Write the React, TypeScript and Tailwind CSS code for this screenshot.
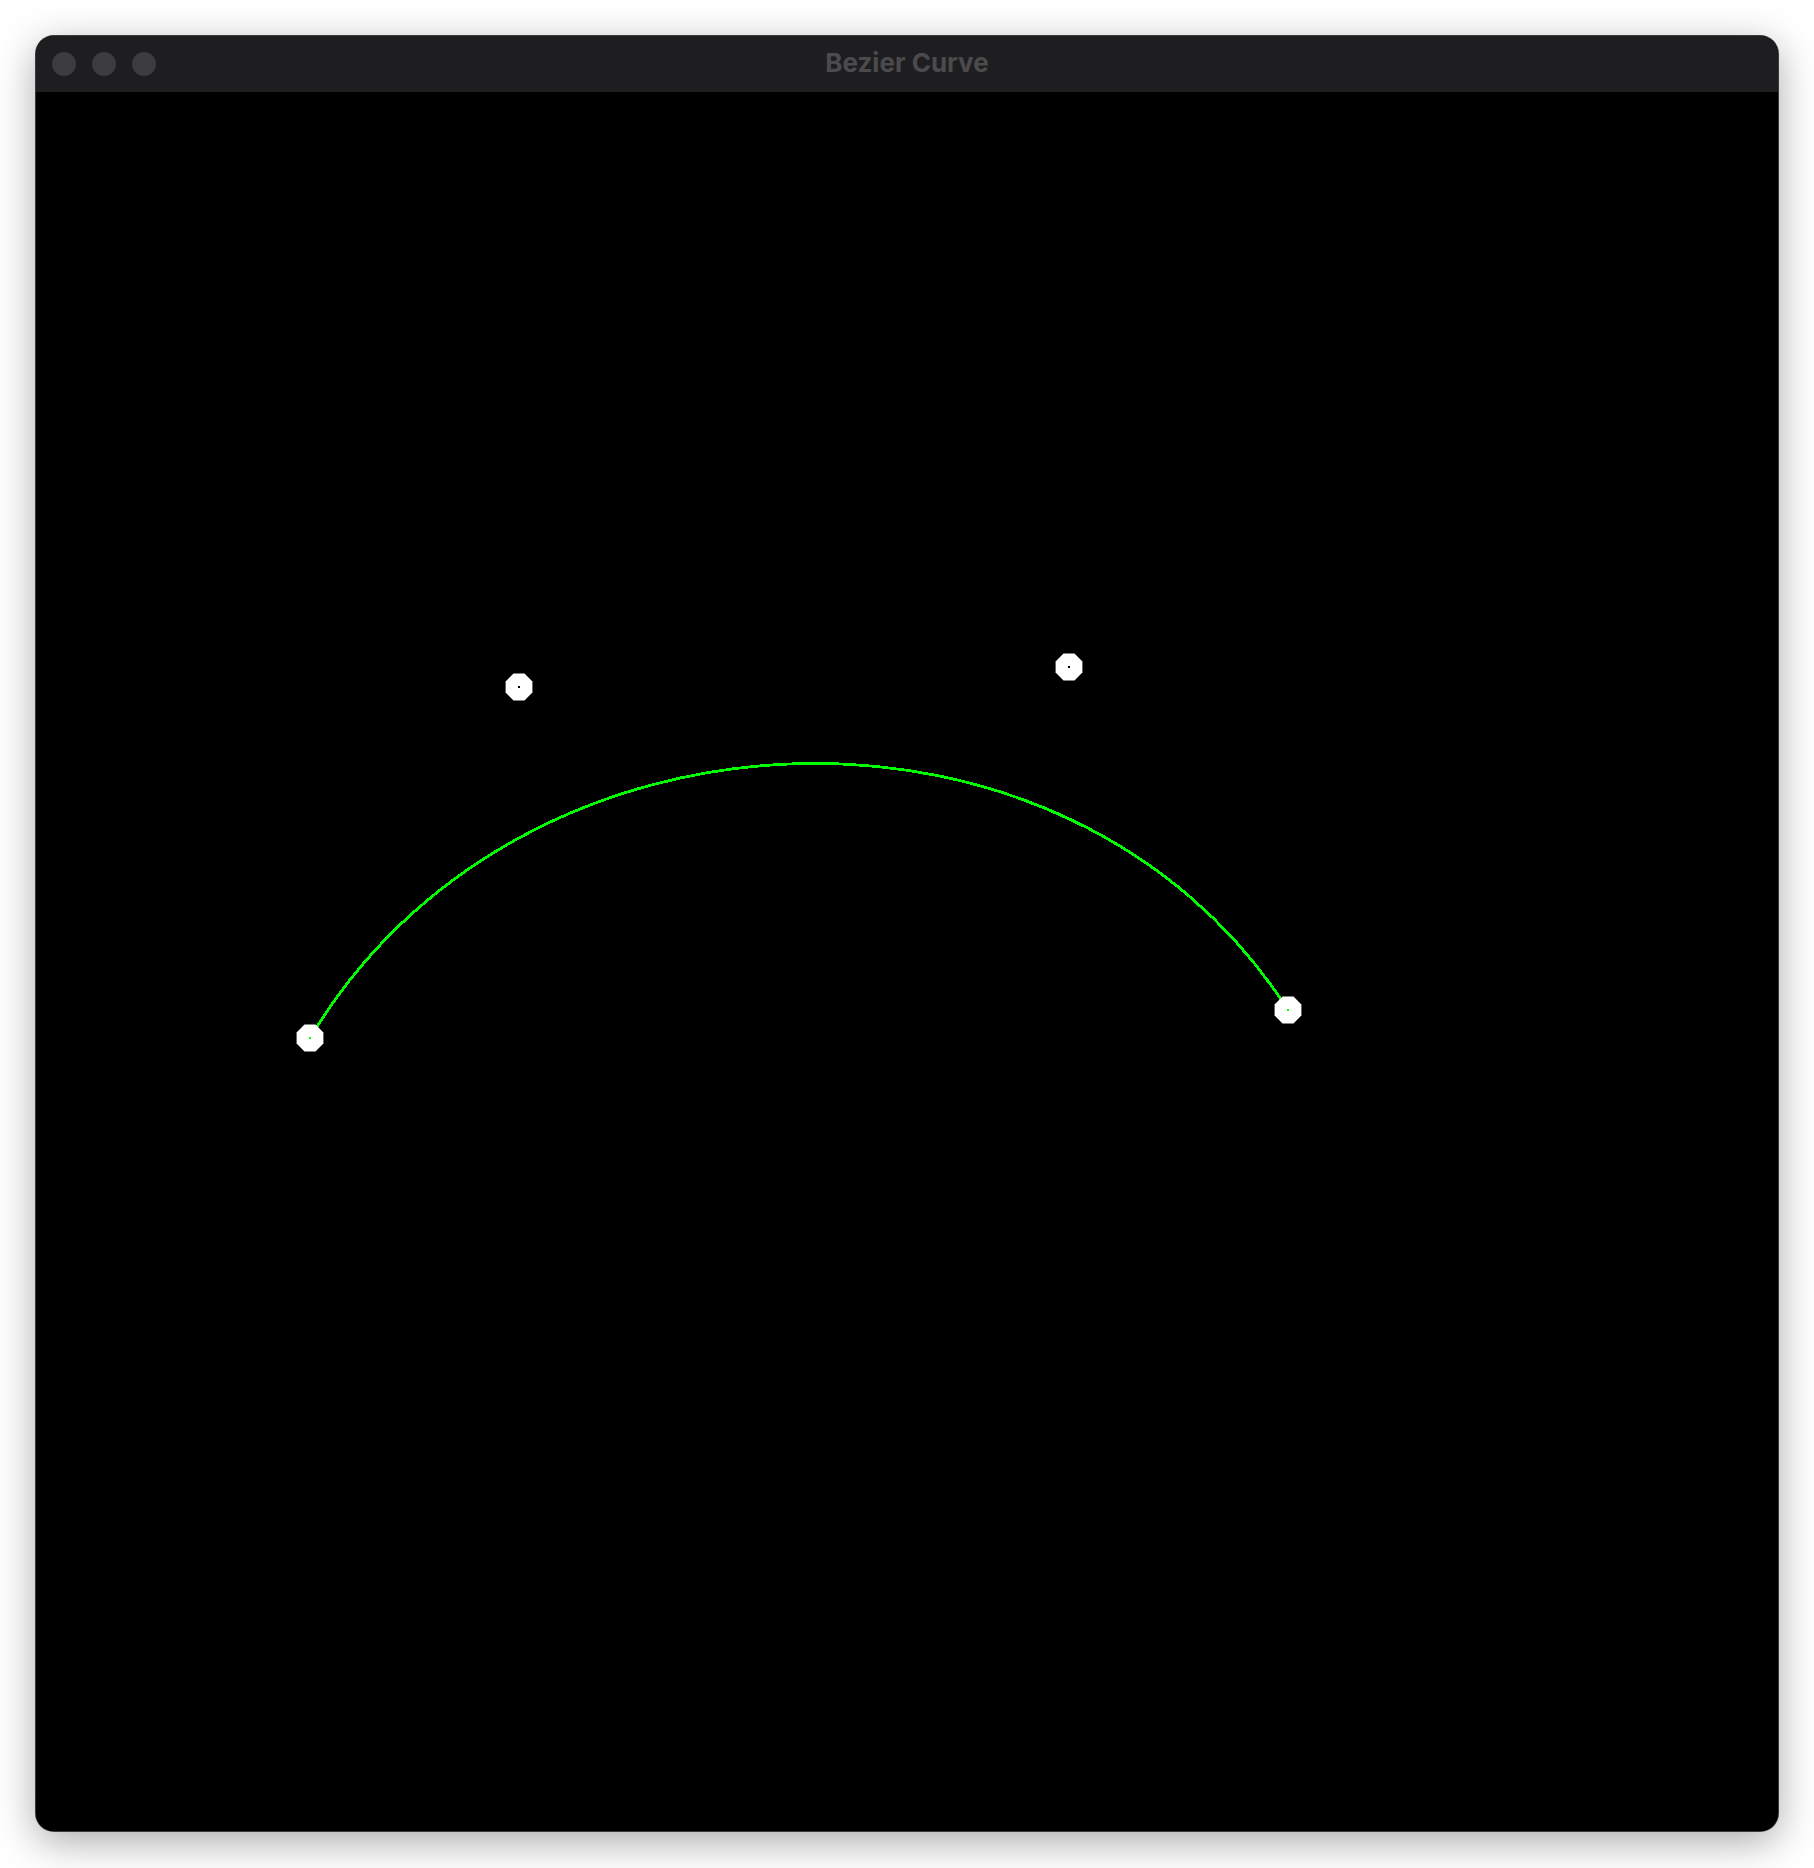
const P = [
  { x: 310, y: 1038 },
  { x: 519, y: 687 },
  { x: 1069, y: 667 },
  { x: 1288, y: 1010 },
];

const TOP = 92;
const LEFT = 36;

function octagon(cx: number, cy: number, r: number) {
  const pts: string[] = [];
  for (let i = 0; i < 8; i++) {
    const a = ((22.5 + i * 45) * Math.PI) / 180;
    pts.push(`${(cx + r * Math.cos(a)).toFixed(1)},${(cy + r * Math.sin(a)).toFixed(1)}`);
  }
  return pts.join(" ");
}

function BezierCanvas() {
  const p = P.map((q) => ({ x: q.x - LEFT, y: q.y - TOP }));
  const d = `M${p[0].x},${p[0].y} C${p[1].x},${p[1].y} ${p[2].x},${p[2].y} ${p[3].x},${p[3].y}`;
  return (
    <svg width="1742" height="1739" className="block">
      <path d={d} fill="none" stroke="#00ff00" strokeWidth={2.8} shapeRendering="crispEdges" />
      {p.map((q, i) => (
        <g key={i}>
          <polygon points={octagon(q.x, q.y, 14.5)} fill="#ffffff" />
          <rect
            x={q.x - 1}
            y={q.y - 1}
            width={2}
            height={2}
            fill={i === 0 || i === 3 ? "#00ff00" : "#000000"}
          />
        </g>
      ))}
    </svg>
  );
}

export default function App() {
  return (
    <div className="w-[1814px] h-[1868px] bg-white p-[36px]">
      <div className="w-[1742px] h-[1795px] rounded-[18px] overflow-hidden bg-black flex flex-col shadow-[0_10px_40px_rgba(0,0,0,0.35)] ring-1 ring-[#3a3a3c]">
        <div className="h-[56px] bg-[#1e1e20] relative flex items-center justify-center shrink-0">
          <div className="absolute left-[16px] top-[16px] flex gap-[16px]">
            <div className="w-[24px] h-[24px] rounded-full bg-[#3c3c3e]" />
            <div className="w-[24px] h-[24px] rounded-full bg-[#3c3c3e]" />
            <div className="w-[24px] h-[24px] rounded-full bg-[#3c3c3e]" />
          </div>
          <span
            className="text-[26px] font-bold text-[#4b4b4d] -mt-[3px]"
            style={{ fontFamily: "Inter, 'Liberation Sans', sans-serif" }}
          >
            Bezier Curve
          </span>
        </div>
        <div className="flex-1 bg-black">
          <BezierCanvas />
        </div>
      </div>
    </div>
  );
}
